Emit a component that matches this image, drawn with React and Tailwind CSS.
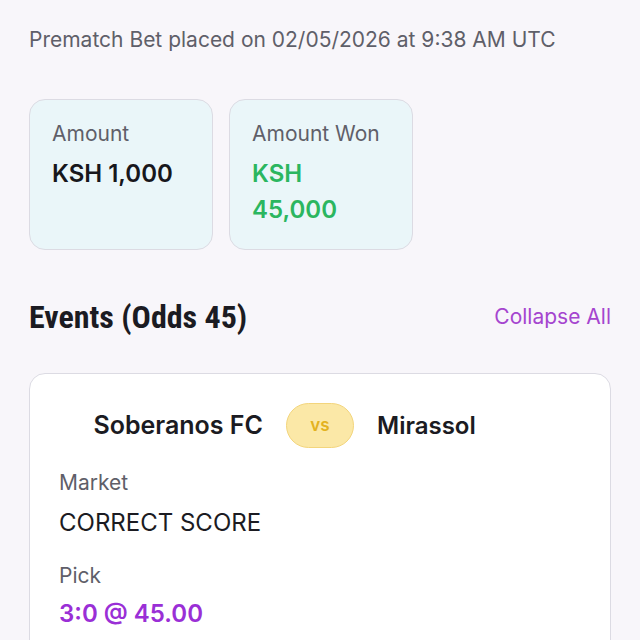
export default function App() {
  return (
    <div
      className="min-h-screen bg-[#f8f6fa] px-[29px] pt-[28px] pb-10"
      style={{ fontFamily: "Inter, 'Noto Sans', sans-serif" }}
    >
      <p className="text-[21px] leading-[24px] text-[#5f5f69]">
        Prematch Bet placed on 02/05/2026 at 9:38 AM UTC
      </p>

      {/* Summary cards */}
      <div className="mt-[47px] flex gap-4">
        <div className="w-[184px] rounded-2xl border border-[#dcdbe3] bg-[#eaf6f9] px-[22px] pt-[21px] pb-[21px]">
          <div className="text-[21px] leading-[26px] text-[#5f5f69]">Amount</div>
          <div className="mt-[9px] text-[24px] font-semibold leading-[36px] text-[#17171c]">
            KSH 1,000
          </div>
        </div>
        <div className="w-[184px] rounded-2xl border border-[#dcdbe3] bg-[#eaf6f9] px-[22px] pt-[21px] pb-[21px]">
          <div className="text-[21px] leading-[26px] text-[#5f5f69]">Amount Won</div>
          <div className="mt-[9px] w-[120px] text-[24px] font-semibold leading-[36px] text-[#2bb660]">
            KSH 45,000
          </div>
        </div>
      </div>

      {/* Events header */}
      <div className="mt-[50px] flex items-center justify-between">
        <h2
          className="text-[32px] font-bold leading-[34px] text-[#1b1b22] font-stretch-condensed"
          style={{ fontFamily: "'Roboto Condensed', 'Liberation Sans Narrow', 'DejaVu Sans Condensed', Roboto, sans-serif" }}
        >
          Events (Odds 45)
        </h2>
        <button className="text-[21px] leading-[24px] text-[#a545cf]">Collapse All</button>
      </div>

      {/* Event card */}
      <div className="mt-[39px] rounded-2xl border border-[#dcdbe3] bg-white px-[29px] pt-[29px] pb-8">
        <div className="grid grid-cols-[1fr_auto_1fr] items-center gap-[23px]">
          <div className="text-right text-[25px] font-semibold text-[#1b1b22]">Soberanos FC</div>
          <div className="flex h-[45px] w-[68px] items-center justify-center rounded-full border border-[#f3d57c] bg-[#fbe8a7] text-[17px] font-semibold text-[#e3b21f]">
            vs
          </div>
          <div className="text-left text-[24px] font-semibold text-[#1b1b22]">Mirassol</div>
        </div>

        <div className="mt-[23px] text-[21px] leading-[24px] text-[#5f5f69]">Market</div>
        <div className="mt-[14px] text-[24px] leading-[28px] text-[#1b1b22]">CORRECT SCORE</div>

        <div className="mt-[27px] text-[21px] leading-[24px] text-[#5f5f69]">Pick</div>
        <div className="mt-[11px] text-[24px] font-semibold leading-[30px] text-[#9a2fd6]">
          3:0 @ 45.00
        </div>
      </div>
    </div>
  );
}
